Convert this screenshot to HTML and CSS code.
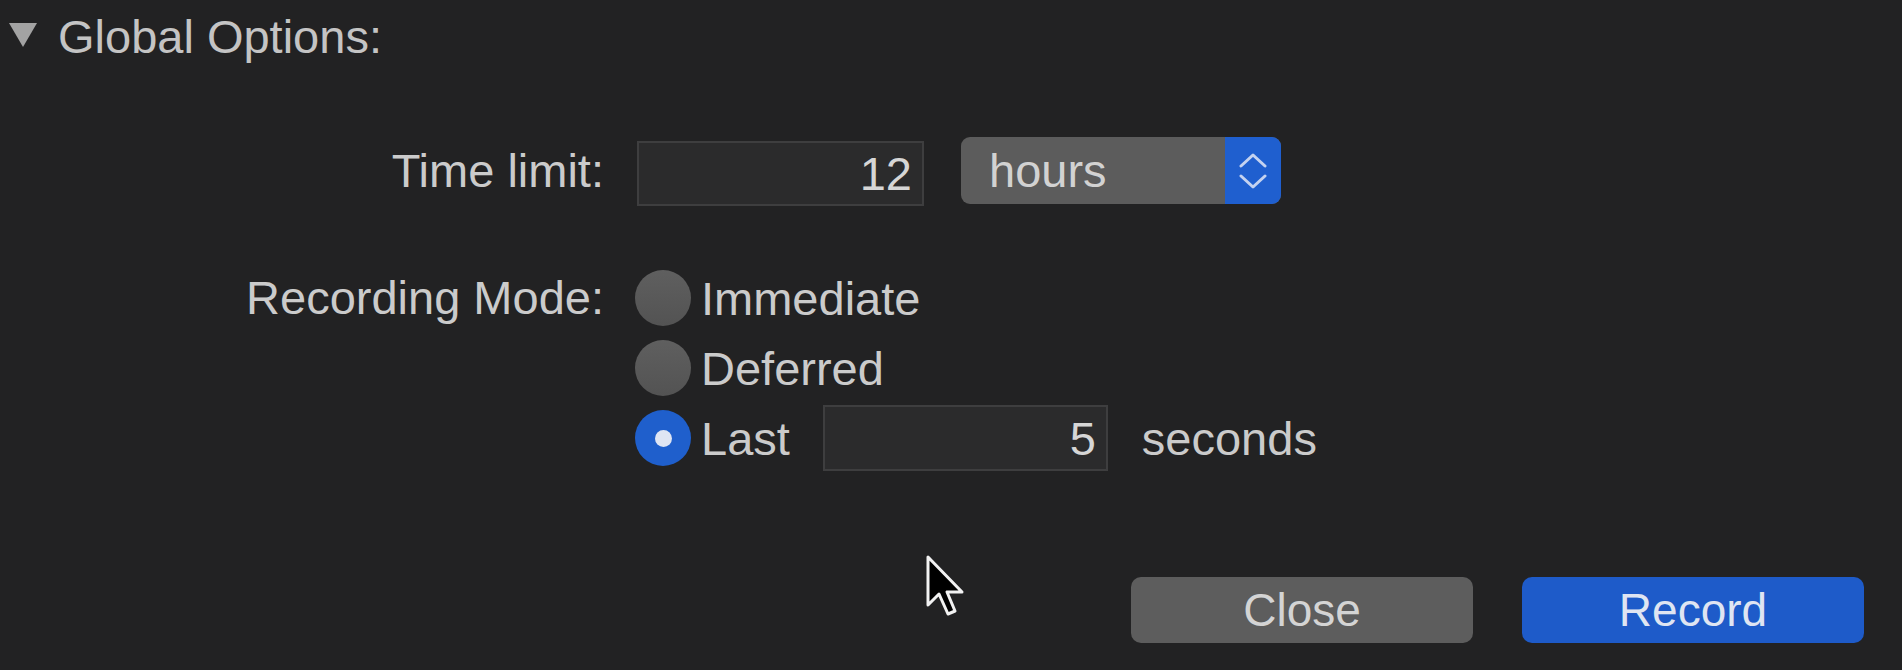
FILE: index.html
```html
<!DOCTYPE html>
<html lang="en">
<head>
<meta charset="utf-8">
<title>Global Options</title>
<link rel="stylesheet" href="styles.css">
</head>
<body>
<div class="dialog">
  <div class="disclosure">
    <span class="tri"></span>
    <span class="title">Global Options:</span>
  </div>

  <div class="form">
    <div class="label label-time">Time limit:</div>
    <div class="controls">
      <div class="field field-time">12</div>
      <div class="popup">
        <span class="popup-value">hours</span>
        <span class="popup-arrows">
          <svg width="28" height="38" viewBox="0 0 28 38" fill="none" stroke="#c4d2f0" stroke-width="3" stroke-linecap="round" stroke-linejoin="round">
            <path d="M2 14 L14 3 L26 14"/>
            <path d="M2 24 L14 35 L26 24"/>
          </svg>
        </span>
      </div>
    </div>

    <div class="label label-mode">Recording Mode:</div>
    <div class="radios">
      <div class="option"><span class="radio"></span><span class="opt-text">Immediate</span></div>
      <div class="option"><span class="radio"></span><span class="opt-text">Deferred</span></div>
      <div class="option">
        <span class="radio on"><span class="dot"></span></span>
        <span class="opt-text">Last</span>
        <div class="field field-secs">5</div>
        <span class="unit">seconds</span>
      </div>
    </div>
  </div>

  <div class="buttons">
    <div class="btn">Close</div>
    <div class="btn primary">Record</div>
  </div>

  <svg class="cursor" width="40" height="64" viewBox="0 0 40 64">
    <path d="M3 3 L3 51 L14 40 L23 60 L30 57 L22 38 L37 38 Z" fill="#000" stroke="#f2f2f2" stroke-width="3" stroke-linejoin="round"/>
  </svg>
</div>
</body>
</html>
```

FILE: styles.css
```css
html, body {
  margin: 0;
  padding: 0;
  background: #222223;
}

body {
  font-family: "Liberation Sans", Arial, sans-serif;
  font-size: 47px;
  color: #cbcbcb;
  width: 1902px;
  height: 670px;
  overflow: hidden;
}

.dialog {
  position: relative;
  height: 670px;
}

.disclosure {
  display: flex;
  align-items: center;
  padding-top: 9px;
  padding-left: 9px;
  height: 56px;
  line-height: 56px;
}

.tri {
  width: 0;
  height: 0;
  border-left: 14px solid transparent;
  border-right: 14px solid transparent;
  border-top: 24px solid #a3a3a3;
  margin-right: 21px;
  margin-top: -4px;
}

.title {
  color: #c4c4c4;
}

.form {
  display: grid;
  grid-template-columns: 604px auto;
  column-gap: 31px;
  row-gap: 61px;
  margin-top: 72px;
}

.label {
  text-align: right;
  display: flex;
  justify-content: flex-end;
  align-items: center;
  height: 67px;
  line-height: 56px;
}

.label-mode {
  height: 66px;
}

.controls {
  display: flex;
  align-items: center;
  height: 67px;
  gap: 37px;
}

.field {
  box-sizing: border-box;
  background: #2b2b2c;
  border: 2px solid #3e3e3f;
  text-align: right;
  padding-right: 10px;
  color: #d6d6d6;
  display: flex;
  align-items: center;
  justify-content: flex-end;
}

.field-time {
  width: 287px;
  height: 65px;
  margin-left: 2px;
  margin-top: 6px;
}

.popup {
  display: flex;
  width: 320px;
  height: 67px;
  border-radius: 9px;
  overflow: hidden;
  background: #5c5c5c;
}

.popup-value {
  flex: 1;
  padding-left: 28px;
  line-height: 67px;
  color: #d2d2d2;
}

.popup-arrows {
  width: 56px;
  background: #1f5fcf;
  display: flex;
  align-items: center;
  justify-content: center;
}

.radios {
  display: flex;
  flex-direction: column;
  gap: 4px;
}

.option {
  display: flex;
  align-items: center;
  height: 66px;
}

.radio {
  box-sizing: border-box;
  width: 56px;
  height: 56px;
  border-radius: 50%;
  background: linear-gradient(#5f5f5f, #535353);
  display: flex;
  align-items: center;
  justify-content: center;
  margin-right: 10px;
}

.radio.on {
  background: #1f5fcc;
}

.dot {
  width: 17px;
  height: 17px;
  border-radius: 50%;
  background: #dfe5f3;
}

.opt-text {
  color: #cbcbcb;
}

.field-secs {
  width: 285px;
  height: 66px;
  margin-left: 33px;
}

.unit {
  margin-left: 34px;
}

.buttons {
  display: flex;
  justify-content: flex-end;
  gap: 49px;
  padding-right: 38px;
  margin-top: 106px;
}

.btn {
  width: 342px;
  height: 66px;
  border-radius: 10px;
  background: #5d5d5d;
  color: #d4d4d4;
  font-size: 46px;
  display: flex;
  align-items: center;
  justify-content: center;
}

.btn.primary {
  background: #1e5bc9;
  color: #dfe5f2;
}

.cursor {
  position: absolute;
  left: 925px;
  top: 554px;
}
```
